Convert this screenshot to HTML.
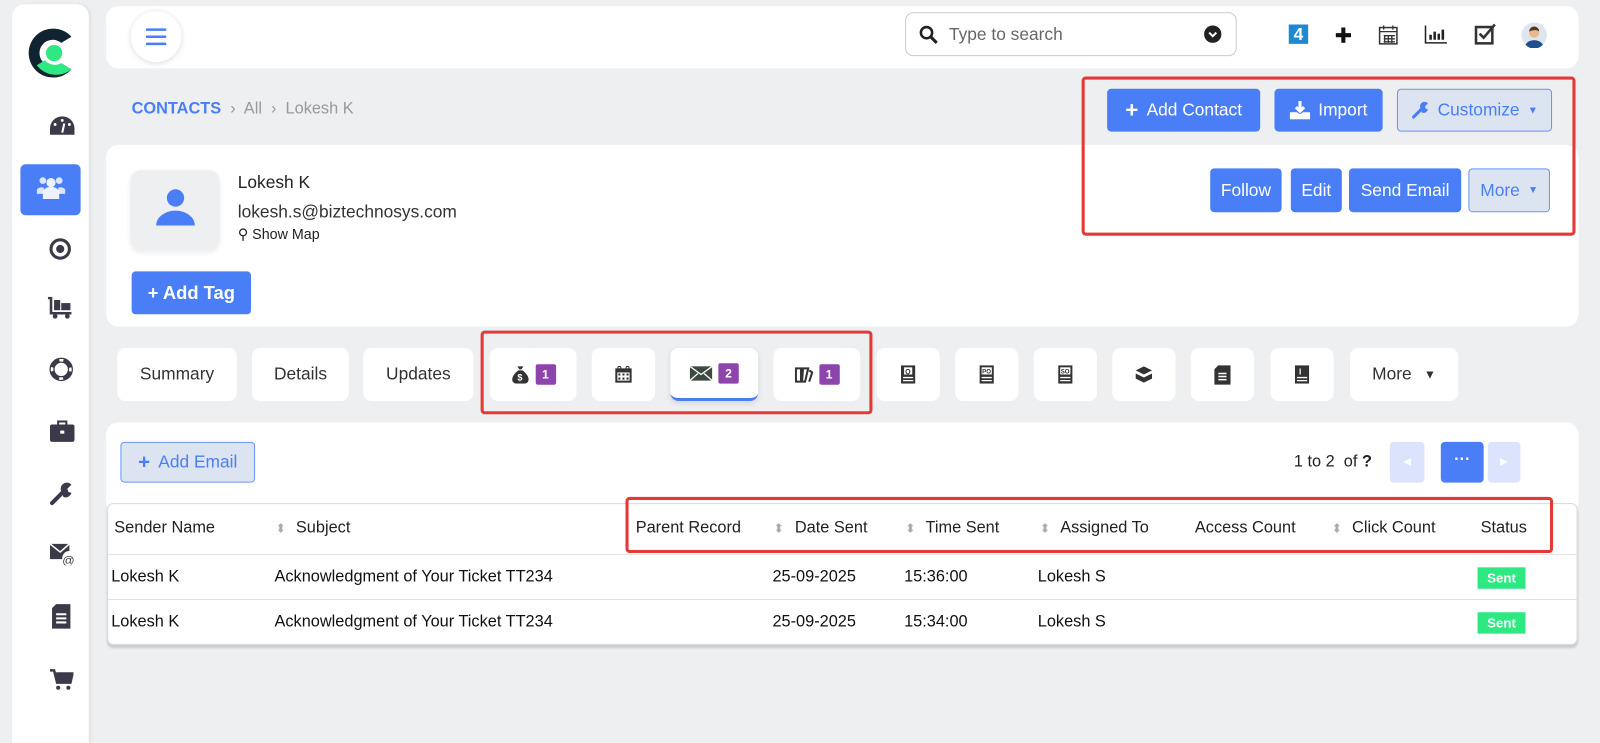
<!DOCTYPE html>
<html><head><meta charset="utf-8"><style>
*{box-sizing:border-box;margin:0;padding:0}
body{width:1600px;height:728px;background:#eeeff1;font-family:"Liberation Sans",sans-serif;position:relative;overflow:hidden;color:#222}
#wrap{position:absolute;left:0;top:0;width:1568px;height:714px;transform:scale(1.0204);transform-origin:0 0}
.abs{position:absolute}
.card{position:absolute;background:#fff;border-radius:12px}
.btn{position:absolute;background:#4a7ef7;color:#fff;border-radius:4px;font-size:17px;display:flex;align-items:center;justify-content:center;gap:8px}
.lbtn{position:absolute;background:#dbe4f0;color:#4a7ef7;border:1px solid #6b95f5;border-radius:4px;font-size:17px;display:flex;align-items:center;justify-content:center;gap:8px}
.red{position:absolute;border:3px solid #e53935;border-radius:4px}
.tab{position:absolute;top:341px;height:52px;background:#fff;border-radius:8px;display:flex;align-items:center;justify-content:center;font-size:17px;color:#333;gap:6px}
.badge{background:#8e44ad;color:#fff;font-size:12px;font-weight:bold;width:20px;height:20px;border-radius:2px;display:flex;align-items:center;justify-content:center}
.ic{width:18px;height:18px}
.th{position:absolute;top:509px;font-size:16px;color:#222}
.td{position:absolute;font-size:16px;color:#111}
.side svg{position:absolute;left:36px}
</style></head><body><div id="wrap">
<!-- sidebar -->
<div class="abs side" style="left:12px;top:4px;width:75px;height:724px;background:#fff;border-radius:12px 12px 0 0;box-shadow:2px 0 3px rgba(0,0,0,.06)">
  <svg style="left:14px;top:22px" width="48" height="52" viewBox="0 0 48 52"><path d="M44 10 A24 24 0 1 0 44 42 L34 36 A13 13 0 1 1 34 16 Z" fill="#0f2430"/><path d="M10 38 A24 24 0 0 0 44 42 L34 36 A13 13 0 0 1 18 33 Z" fill="#2ee882"/><circle cx="27" cy="26" r="8" fill="#2ee882"/></svg>
  <svg style="top:108px" width="26" height="22" viewBox="0 0 26 22"><path d="M13 2A12 12 0 0 0 1 14v6h24v-6A12 12 0 0 0 13 2z" fill="#3b3a48"/><circle cx="13" cy="6" r="1.4" fill="#fff"/><circle cx="6" cy="10" r="1.4" fill="#fff"/><circle cx="20" cy="10" r="1.4" fill="#fff"/><path d="M13 18l2-9" stroke="#fff" stroke-width="2"/></svg>
  <div class="abs" style="left:8px;top:157px;width:59px;height:50px;background:#4a7ef7;border-radius:5px"></div>
  <svg style="top:168px;left:24px" width="28" height="24" viewBox="0 0 28 24"><circle cx="14" cy="7" r="4.5" fill="#fff" opacity=".9"/><circle cx="6" cy="5" r="3.3" fill="#fff" opacity=".8"/><circle cx="22" cy="5" r="3.3" fill="#fff" opacity=".8"/><path d="M6 23v-6a8 6 0 0 1 16 0v6z" fill="#fff" opacity=".9"/><path d="M0 18v-4a5 4 0 0 1 7-2v6z M28 18v-4a5 4 0 0 0-7-2v6z" fill="#fff" opacity=".8"/></svg>
  <svg style="top:229px" width="22" height="22" viewBox="0 0 22 22"><circle cx="11" cy="11" r="9" fill="none" stroke="#3b3a48" stroke-width="3"/><circle cx="11" cy="11" r="4" fill="#3b3a48"/></svg>
  <svg style="top:287px;left:34px" width="26" height="22" viewBox="0 0 26 22"><path d="M1 1h3v15h20" stroke="#3b3a48" stroke-width="2.5" fill="none"/><rect x="7" y="3" width="6" height="10" fill="#3b3a48"/><rect x="14" y="6" width="9" height="7" fill="#3b3a48"/><circle cx="8" cy="19" r="2.3" fill="#3b3a48"/><circle cx="20" cy="19" r="2.3" fill="#3b3a48"/></svg>
  <svg style="top:346px" width="24" height="24" viewBox="0 0 24 24"><circle cx="12" cy="12" r="9" fill="none" stroke="#3b3a48" stroke-width="5"/><circle cx="12" cy="12" r="9" fill="none" stroke="#fff" stroke-width="2.5" stroke-dasharray="4 10.1" stroke-dashoffset="2"/></svg>
  <svg style="top:408px" width="26" height="22" viewBox="0 0 26 22"><path d="M9 4V1h8v3" stroke="#3b3a48" stroke-width="2" fill="none"/><rect x="1" y="4" width="24" height="17" rx="2" fill="#3b3a48"/><rect x="11" y="10" width="4" height="3" fill="#fff"/></svg>
  <svg style="top:468px" width="24" height="24" viewBox="0 0 24 24"><path d="M3 21l10-10" stroke="#3b3a48" stroke-width="4" stroke-linecap="round"/><path d="M13 11a6 6 0 0 1 9-8l-4 4 1 3 3 1a6 6 0 0 1-8 4z" fill="#3b3a48"/></svg>
  <svg style="top:528px" width="26" height="22" viewBox="0 0 26 22"><path d="M1 1h19v7a7 7 0 0 0-7 8H1z" fill="#3b3a48"/><path d="M1 1l10 8 9-8" stroke="#fff" stroke-width="1.5" fill="none"/><text x="13" y="21" font-size="12" font-family="Liberation Sans" fill="#3b3a48">@</text></svg>
  <svg style="top:587px;left:38px" width="20" height="26" viewBox="0 0 20 26"><path d="M5 1h14v24H1V5z" fill="#3b3a48"/><path d="M5 11h10M5 15h10M5 19h10" stroke="#fff" stroke-width="2"/></svg>
  <svg style="top:651px" width="24" height="22" viewBox="0 0 24 22"><path d="M1 2h4l3 12h13l2-9H7" fill="none" stroke="#3b3a48" stroke-width="2.5"/><path d="M7 5h16l-2 9H8z" fill="#3b3a48"/><circle cx="9" cy="19" r="2" fill="#3b3a48"/><circle cx="19" cy="19" r="2" fill="#3b3a48"/></svg>
</div>
<!-- top bar -->
<div class="card" style="left:104px;top:6px;width:1443px;height:61px"></div>
<div class="abs" style="left:128px;top:11px;width:50px;height:50px;border-radius:50%;background:#fff;box-shadow:0 1px 5px rgba(0,0,0,.15)"></div>
<svg class="abs" style="left:143px;top:26px" width="20" height="20" viewBox="0 0 20 20"><path d="M1 3h18M1 10h18M1 17h18" stroke="#4a7ef7" stroke-width="2.5" stroke-linecap="round"/></svg>
<div class="abs" style="left:887px;top:12px;width:325px;height:43px;border:1px solid #ccc;border-radius:8px"></div>
<svg class="abs" style="left:901px;top:25px" width="18" height="18" viewBox="0 0 18 18"><circle cx="7" cy="7" r="5.5" fill="none" stroke="#222" stroke-width="2.5"/><path d="M11 11l6 6" stroke="#222" stroke-width="3"/></svg>
<div class="abs" style="left:930px;top:24px;font-size:17px;color:#666">Type to search</div>
<svg class="abs" style="left:1180px;top:25px" width="17" height="17" viewBox="0 0 17 17"><circle cx="8.5" cy="8.5" r="8.5" fill="#222"/><path d="M5 7l3.5 3.5L12 7" stroke="#fff" stroke-width="2" fill="none"/></svg>
<div class="abs" style="left:1263px;top:24px;width:19px;height:19px;background:#1e88d0;color:#fff;font-weight:bold;font-size:17px;text-align:center;line-height:19px">4</div>
<svg class="abs" style="left:1309px;top:27px" width="15" height="15" viewBox="0 0 15 15"><path d="M7.5 0v15M0 7.5h15" stroke="#111" stroke-width="4"/></svg>
<svg class="abs" style="left:1351px;top:24px" width="19" height="20" viewBox="0 0 19 20"><rect x="1" y="3" width="17" height="16" fill="none" stroke="#333" stroke-width="1.5"/><path d="M1 7h17M5 11h11M5 14h11M5 17h11M6 11v7M9.5 11v7M13 11v7M5 1v4M14 1v4" stroke="#333" stroke-width="1.3"/></svg>
<svg class="abs" style="left:1396px;top:25px" width="22" height="18" viewBox="0 0 22 18"><path d="M1 0v17h21" stroke="#222" stroke-width="1.5" fill="none"/><path d="M6 14V9M10 14V6M14 14V8M18 14V4" stroke="#222" stroke-width="2.5"/></svg>
<svg class="abs" style="left:1445px;top:23px" width="21" height="21" viewBox="0 0 21 21"><rect x="1.5" y="3.5" width="16" height="16" fill="none" stroke="#333" stroke-width="2.5"/><path d="M5 10l4 4 11-13" stroke="#333" stroke-width="2.5" fill="none"/></svg>
<svg class="abs" style="left:1491px;top:22px" width="25" height="25" viewBox="0 0 25 25"><circle cx="12.5" cy="12.5" r="12.5" fill="#dde6ee"/><path d="M4 22a9 7 0 0 1 17 0a12 12 0 0 1-17 0z" fill="#1f4f8c"/><circle cx="12.5" cy="10" r="5" fill="#e9b98c"/><path d="M7.5 9a5 5 0 0 1 10 0c-2-2-6-2-10 0z" fill="#5a3420"/></svg>
<!-- breadcrumb -->
<div class="abs" style="left:129px;top:98px;font-size:16px;color:#999"><span style="color:#4a7ef7;font-weight:bold">CONTACTS</span> &nbsp;›&nbsp; All &nbsp;›&nbsp; Lokesh K</div>
<div class="btn" style="left:1085px;top:87px;width:150px;height:42px"><b style="font-size:22px;font-weight:bold">+</b> Add Contact</div>
<div class="btn" style="left:1249px;top:87px;width:106px;height:42px"><svg width="20" height="18" viewBox="0 0 20 18"><path d="M10 0v9M6 6l4 4 4-4" stroke="#fff" stroke-width="3" fill="none"/><path d="M0 11h7l3 2 3-2h7v7H0z" fill="#fff"/></svg> Import</div>
<div class="lbtn" style="left:1369px;top:87px;width:152px;height:42px"><svg width="18" height="18" viewBox="0 0 24 24"><path d="M3 21l10-10" stroke="#4a7ef7" stroke-width="4" stroke-linecap="round"/><path d="M13 11a6 6 0 0 1 9-8l-4 4 1 3 3 1a6 6 0 0 1-8 4z" fill="#4a7ef7"/></svg>Customize <span style="font-size:10px">▼</span></div>
<!-- contact card -->
<div class="card" style="left:104px;top:142px;width:1443px;height:178px"></div>
<div class="abs" style="left:128px;top:167px;width:87px;height:78px;background:#eeeff1;border-radius:10px;box-shadow:0 2px 5px rgba(0,0,0,.08)"></div>
<svg class="abs" style="left:152px;top:184px" width="40" height="40" viewBox="0 0 40 40"><circle cx="20" cy="10" r="8.5" fill="#4a7ef7"/><path d="M1 37a13 10 0 0 1 38 0z" fill="#4a7ef7"/></svg>
<div class="abs" style="left:233px;top:169px;font-size:17px;color:#222">Lokesh K</div>
<div class="abs" style="left:233px;top:198px;font-size:17px;color:#333">lokesh.s@biztechnosys.com</div>
<div class="abs" style="left:233px;top:221px;font-size:14px;color:#222">⚲ Show Map</div>
<div class="btn" style="left:129px;top:266px;width:117px;height:42px;font-weight:bold;font-size:18px">+ Add Tag</div>
<div class="btn" style="left:1186px;top:165px;width:70px;height:43px">Follow</div>
<div class="btn" style="left:1265px;top:165px;width:50px;height:43px">Edit</div>
<div class="btn" style="left:1322px;top:165px;width:110px;height:43px">Send Email</div>
<div class="lbtn" style="left:1439px;top:165px;width:80px;height:43px">More <span style="font-size:10px">▼</span></div>
<div class="red" style="left:1060px;top:75px;width:484px;height:156px"></div>
<!-- tabs -->
<div class="tab" style="left:115px;width:117px">Summary</div>
<div class="tab" style="left:247px;width:95px">Details</div>
<div class="tab" style="left:356px;width:108px">Updates</div>
<div class="tab" style="left:480px;width:85px"><svg class="ic" viewBox="0 0 18 18"><path d="M6 1h6l-2 3h-2z" fill="#333"/><path d="M7 5h4c4 3 6 6 6 9a4 4 0 0 1-4 4H5a4 4 0 0 1-4-4c0-3 2-6 6-9z" fill="#333"/><text x="6" y="15" font-size="9" fill="#fff" font-family="Liberation Sans" font-weight="bold">$</text></svg><span class="badge">1</span></div>
<div class="tab" style="left:580px;width:62px"><svg class="ic" viewBox="0 0 18 18"><rect x="1" y="3" width="16" height="14" fill="#333"/><rect x="3" y="7" width="12" height="8" fill="#fff"/><path d="M4 8h2v2H4zM8 8h2v2H8zM12 8h2v2h-2zM4 12h2v2H4zM8 12h2v2H8zM12 12h2v2h-2z" fill="#333"/><circle cx="5" cy="2.5" r="1.5" fill="none" stroke="#333"/><circle cx="13" cy="2.5" r="1.5" fill="none" stroke="#333"/></svg></div>
<div class="tab" style="left:657px;width:86px;box-shadow:0 2px 5px rgba(0,0,0,.1);border-bottom:3px solid #4a7ef7"><svg width="22" height="16" viewBox="0 0 22 16"><rect x="0" y="1" width="22" height="14" fill="#3b4a3e"/><path d="M0 1l11 8 11-8M0 15l8-7M22 15l-8-7" stroke="#fff" stroke-width="1.3" fill="none"/></svg><span class="badge">2</span></div>
<div class="tab" style="left:758px;width:85px"><svg class="ic" viewBox="0 0 18 18"><path d="M1 3h5v13H1zM8 3h5l-3 13H7z" fill="none" stroke="#333" stroke-width="2"/><path d="M14 5l3 2-3 9" stroke="#333" stroke-width="2" fill="none"/></svg><span class="badge">1</span></div>
<div class="tab" style="left:859px;width:62px"><svg width="14" height="18" viewBox="0 0 14 18"><rect width="14" height="18" fill="#333"/><rect x="3" y="2" width="8" height="7" fill="#fff"/><text x="4" y="8.5" font-size="7" font-weight="bold" font-family="Liberation Sans" fill="#333">Q</text><path d="M2 12h10M2 15h10" stroke="#fff" stroke-width="1.3"/></svg></div>
<div class="tab" style="left:936px;width:62px"><svg width="14" height="18" viewBox="0 0 14 18"><rect width="14" height="18" fill="#333"/><rect x="2" y="2" width="10" height="7" fill="#fff"/><text x="2.5" y="8" font-size="6" font-weight="bold" font-family="Liberation Sans" fill="#333">PO</text><path d="M2 12h10M2 15h10" stroke="#fff" stroke-width="1.3"/></svg></div>
<div class="tab" style="left:1013px;width:62px"><svg width="14" height="18" viewBox="0 0 14 18"><rect width="14" height="18" fill="#333"/><rect x="2" y="2" width="10" height="7" fill="#fff"/><text x="2.5" y="8" font-size="6" font-weight="bold" font-family="Liberation Sans" fill="#333">SO</text><path d="M2 12h10M2 15h10" stroke="#fff" stroke-width="1.3"/></svg></div>
<div class="tab" style="left:1090px;width:62px"><svg class="ic" viewBox="0 0 18 18"><path d="M9 1l8 4-8 4-8-4z M1 8l8 4 8-4v5l-8 4-8-4z" fill="#333"/></svg></div>
<div class="tab" style="left:1167px;width:62px"><svg width="16" height="19" viewBox="0 0 16 19"><path d="M4 0h12v19H0V4z" fill="#333"/><path d="M4 8h8M4 11h8M4 14h8" stroke="#fff" stroke-width="1.5"/></svg></div>
<div class="tab" style="left:1245px;width:62px"><svg width="14" height="18" viewBox="0 0 14 18"><rect width="14" height="18" fill="#333"/><text x="4" y="9" font-size="8" font-weight="bold" font-family="Liberation Sans" fill="#fff">I</text><path d="M2 12h10M2 15h10" stroke="#fff" stroke-width="1.3"/></svg></div>
<div class="tab" style="left:1323px;width:106px">More <span style="font-size:12px;margin-left:6px">▼</span></div>
<div class="red" style="left:471px;top:324px;width:384px;height:82px"></div>
<!-- email panel -->
<div class="card" style="left:104px;top:414px;width:1443px;height:90px"></div>
<div class="lbtn" style="left:118px;top:433px;width:132px;height:40px"><b style="font-size:20px">+</b> Add Email</div>
<div class="abs" style="left:1268px;top:444px;font-size:16px;color:#222">1 to 2 &nbsp;of <b>?</b></div>
<div class="abs" style="left:1362px;top:433px;width:34px;height:40px;background:#dbe4fc;border-radius:4px;color:#fff;font-size:10px;text-align:center;line-height:40px">◀</div>
<div class="abs" style="left:1412px;top:433px;width:42px;height:40px;background:#4a7ef7;border-radius:4px;color:#fff;font-weight:bold;text-align:center;line-height:36px">···</div>
<div class="abs" style="left:1458px;top:433px;width:32px;height:40px;background:#dbe4fc;border-radius:4px;color:#fff;font-size:10px;text-align:center;line-height:40px">▶</div>
<!-- table -->
<div class="abs" style="left:105px;top:493px;width:1441px;height:139px;background:#fff;border:1px solid #ddd;border-radius:6px;box-shadow:0 3px 2px rgba(0,0,0,.15)"></div>
<div class="abs" style="left:106px;top:543px;width:1439px;height:1px;background:#e3e3e3"></div>
<div class="abs" style="left:106px;top:587px;width:1439px;height:1px;background:#e3e3e3"></div>
<div class="th" style="left:112px">Sender Name</div>
<div class="th" style="left:270px;color:#aaa;font-size:12px;top:511px">⬍</div><div class="th" style="left:290px">Subject</div>
<div class="th" style="left:623px">Parent Record</div>
<div class="th" style="left:758px;color:#aaa;font-size:12px;top:511px">⬍</div><div class="th" style="left:779px">Date Sent</div>
<div class="th" style="left:887px;color:#aaa;font-size:12px;top:511px">⬍</div><div class="th" style="left:907px">Time Sent</div>
<div class="th" style="left:1019px;color:#aaa;font-size:12px;top:511px">⬍</div><div class="th" style="left:1039px">Assigned To</div>
<div class="th" style="left:1171px">Access Count</div>
<div class="th" style="left:1305px;color:#aaa;font-size:12px;top:511px">⬍</div><div class="th" style="left:1325px">Click Count</div>
<div class="th" style="left:1451px">Status</div>
<div class="red" style="left:613px;top:487px;width:909px;height:55px"></div>
<div class="td" style="left:109px;top:557px">Lokesh K</div>
<div class="td" style="left:269px;top:557px">Acknowledgment of Your Ticket TT234</div>
<div class="td" style="left:757px;top:557px">25-09-2025</div>
<div class="td" style="left:886px;top:557px">15:36:00</div>
<div class="td" style="left:1017px;top:557px">Lokesh S</div>
<div class="abs" style="left:1448px;top:556px;width:47px;height:21px;background:#2ee882;color:#fff;font-weight:bold;font-size:13px;text-align:center;line-height:21px">Sent</div>
<div class="td" style="left:109px;top:601px">Lokesh K</div>
<div class="td" style="left:269px;top:601px">Acknowledgment of Your Ticket TT234</div>
<div class="td" style="left:757px;top:601px">25-09-2025</div>
<div class="td" style="left:886px;top:601px">15:34:00</div>
<div class="td" style="left:1017px;top:601px">Lokesh S</div>
<div class="abs" style="left:1448px;top:600px;width:47px;height:21px;background:#2ee882;color:#fff;font-weight:bold;font-size:13px;text-align:center;line-height:21px">Sent</div>
</div></body></html>
